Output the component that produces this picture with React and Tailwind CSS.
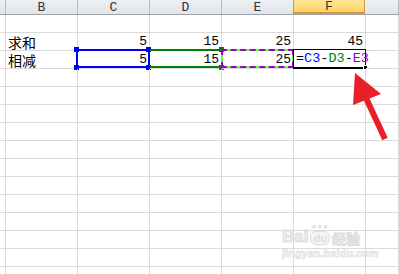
import React from "react";

const cols = [
  { key: "A", w: "w-[6px]" },
  { key: "B", w: "w-[72px]" },
  { key: "C", w: "w-[72px]" },
  { key: "D", w: "w-[72px]" },
  { key: "E", w: "w-[72px]" },
  { key: "F", w: "w-[72px]" },
  { key: "G", w: "flex-1" },
];

const data = {
  2: { B: "求和", C: "5", D: "15", E: "25", F: "45" },
  3: { B: "相减", C: "5", D: "15", E: "25" },
};

// Selection marks drawn over the row-3 cells
function Marks({ col }) {
  if (col === "C")
    return (
      <>
        <div className="absolute -left-[2px] -top-[2px] w-[74px] h-[19px] border-2 border-[#0000ff]" />
        <div className="absolute -left-[4px] -top-[4px] w-[5px] h-[5px] bg-[#0000ff]" />
        <div className="absolute -left-[4px] top-[14px] w-[5px] h-[5px] bg-[#0000ff]" />
        <div className="absolute left-[68px] -top-[4px] w-[5px] h-[5px] bg-[#0000ff]" />
        <div className="absolute left-[68px] top-[14px] w-[5px] h-[5px] bg-[#0000ff]" />
      </>
    );
  if (col === "D")
    return (
      <>
        <div className="absolute left-0 -top-[2px] w-[71px] h-[2px] bg-[#008000]" />
        <div className="absolute left-0 top-[15px] w-[71px] h-[2px] bg-[#008000]" />
        <div className="absolute left-[69px] -top-[4px] w-[5px] h-[5px] bg-[#1b6b1b]" />
        <div className="absolute left-[69px] top-[14px] w-[5px] h-[5px] bg-[#1b6b1b]" />
      </>
    );
  if (col === "E")
    return (
      <>
        <div className="absolute -left-px -top-[2px] w-[73px] h-[19px] border-2 border-[#66ff33]" />
        <div className="absolute -left-px -top-[2px] w-[73px] h-[19px] border-2 border-dashed border-[#9900cc]" />
      </>
    );
  return null;
}

function Cell({ col, value, row }) {
  const isLabel = col === "B";
  const editing = row === 3 && col === "F";
  return (
    <div
      className={`${cols.find((c) => c.key === col).w} relative h-[18px] shrink-0 border-r border-b border-[#dadada] flex items-end ${
        isLabel || editing ? "justify-start pl-[2px]" : "justify-end pr-[2px]"
      }`}
    >
      {value && (
        <span
          className={`relative inline-block ${
            isLabel
              ? "text-[14px] leading-[16px] text-black font-['Noto_Sans_CJK_SC',sans-serif]"
              : "text-[13px] leading-[16px] text-black font-['Liberation_Mono',monospace]"
          }`}
        >
          {value}
        </span>
      )}
      {row === 3 && <Marks col={col} />}
      {editing && (
        <div className="absolute -left-px -top-[2px] w-[73px] h-[20px] border border-b-2 border-black bg-white flex items-end pl-[2px]">
          <span className="text-[13.5px] leading-[16px] font-['Liberation_Mono',monospace] whitespace-nowrap">
            <span className="text-black">=</span>
            <span className="text-[#0000ff]">C3</span>
            <span className="text-black">-</span>
            <span className="text-[#008000]">D3</span>
            <span className="text-black">-</span>
            <span className="text-[#9900cc]">E3</span>
          </span>
          <span className="ml-px w-px h-[16px] bg-black" />
          <span className="absolute -right-[3px] -bottom-[3px] w-[5px] h-[5px] bg-black border border-white" />
        </div>
      )}
    </div>
  );
}

export default function App() {
  const rows = Array.from({ length: 15 }, (_, i) => i + 1);
  return (
    <div className="relative w-[399px] h-[274px] overflow-hidden bg-white">
      {/* column headers */}
      <div className="flex h-[15px] border-b border-[#9ea4ab] bg-gradient-to-b from-[#eef0f3] to-[#e1e4e9]">
        {cols.map((c) => (
          <div
            key={c.key}
            className={`${c.w} shrink-0 h-full border-r flex items-center justify-center text-[13px] leading-none font-['Liberation_Mono',monospace] text-[#333] ${
              c.key === "F"
                ? "bg-gradient-to-b from-[#ffe79a] to-[#ffd45e] border-[#d99a3c] border-l -ml-px border-b-2 border-b-[#d9953a]"
                : "border-[#b9bdc3]"
            }`}
          >
            {c.key === "A" || c.key === "G" ? "" : c.key}
          </div>
        ))}
      </div>

      {/* grid rows */}
      {rows.map((r) => (
        <div key={r} className="flex">
          {cols.map((c) => (
            <Cell key={c.key} col={c.key} row={r} value={data[r]?.[c.key]} />
          ))}
        </div>
      ))}

      {/* red arrow */}
      <svg className="absolute left-0 top-0" width="399" height="274" viewBox="0 0 399 274">
        <polygon points="355,73 381,94 353,105" fill="#e8202a" />
        <line x1="366" y1="98" x2="385" y2="139" stroke="#e8202a" strokeWidth="6" />
      </svg>

      {/* watermark */}
      <div className="absolute left-[282px] top-[222px] flex flex-col items-start opacity-90">
        <div className="flex items-end gap-[2px]">
          <span className="text-[17px] leading-none font-bold text-[#f3f3f3] font-['Liberation_Sans',sans-serif] [-webkit-text-stroke:1px_#d9d9d9]">
            Bai
          </span>
          <span className="flex flex-col items-center">
            <span className="text-[8px] leading-none text-[#e0e0e0] tracking-[1px]">●●●</span>
            <span className="mt-px px-[2px] rounded-[6px] border border-[#d9d9d9] bg-[#f4f4f4] text-[11px] leading-[12px] font-bold text-[#dcdcdc] font-['Liberation_Sans',sans-serif]">
              du
            </span>
          </span>
          <span className="text-[14px] leading-none font-bold text-[#f3f3f3] font-['Noto_Sans_CJK_SC',sans-serif] [-webkit-text-stroke:1px_#d9d9d9]">
            经验
          </span>
        </div>
        <span className="mt-[3px] text-[11px] leading-none font-bold text-[#f0f0f0] font-['Liberation_Sans',sans-serif] [-webkit-text-stroke:0.5px_#dadada]">
          jingyan.baidu.com
        </span>
      </div>
    </div>
  );
}
